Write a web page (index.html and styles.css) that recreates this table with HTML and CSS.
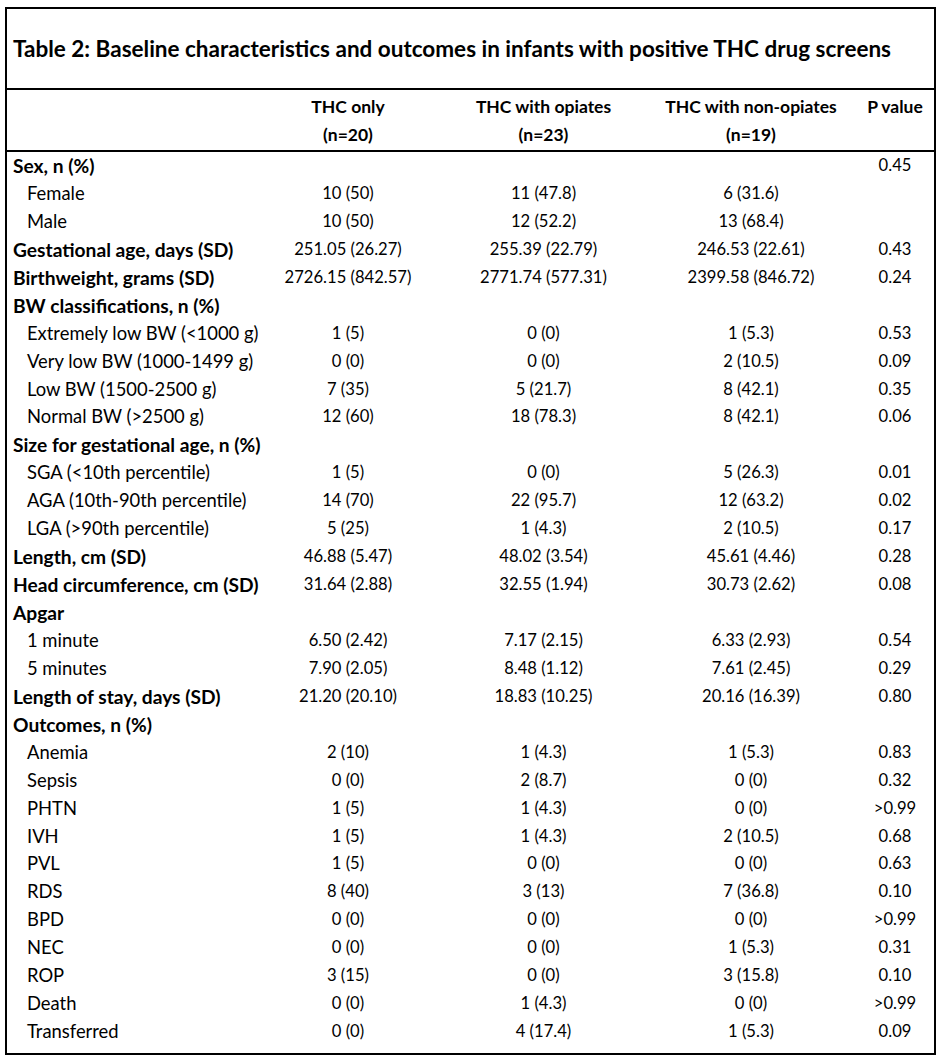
FILE: index.html
```html
<!DOCTYPE html>
<html>
<head>
<meta charset="utf-8">
<link rel="stylesheet" href="styles.css">
</head>
<body>
<div class="frame">
  <div class="title">Table 2: Baseline characteristics and outcomes in infants with positive THC drug screens</div>
  <table class="tbl">
    <colgroup>
      <col class="c0"><col class="c1"><col class="c2"><col class="c3"><col class="c4">
    </colgroup>
    <thead>
      <tr>
        <th></th>
        <th>THC only<br>(n=20)</th>
        <th>THC with opiates<br>(n=23)</th>
        <th>THC with non-opiates<br>(n=19)</th>
        <th class="pv">P value<br>&nbsp;</th>
      </tr>
    </thead>
    <tbody>
      <tr class="grp"><td>Sex, n (%)</td><td></td><td></td><td></td><td>0.45</td></tr>
      <tr><td class="sub">Female</td><td>10 (50)</td><td>11 (47.8)</td><td>6 (31.6)</td><td></td></tr>
      <tr><td class="sub">Male</td><td>10 (50)</td><td>12 (52.2)</td><td>13 (68.4)</td><td></td></tr>
      <tr class="grp"><td>Gestational age, days (SD)</td><td>251.05 (26.27)</td><td>255.39 (22.79)</td><td>246.53 (22.61)</td><td>0.43</td></tr>
      <tr class="grp"><td>Birthweight, grams (SD)</td><td>2726.15 (842.57)</td><td>2771.74 (577.31)</td><td>2399.58 (846.72)</td><td>0.24</td></tr>
      <tr class="grp"><td>BW classifications, n (%)</td><td></td><td></td><td></td><td></td></tr>
      <tr><td class="sub">Extremely low BW (&lt;1000 g)</td><td>1 (5)</td><td>0 (0)</td><td>1 (5.3)</td><td>0.53</td></tr>
      <tr><td class="sub">Very low BW (1000-1499 g)</td><td>0 (0)</td><td>0 (0)</td><td>2 (10.5)</td><td>0.09</td></tr>
      <tr><td class="sub">Low BW (1500-2500 g)</td><td>7 (35)</td><td>5 (21.7)</td><td>8 (42.1)</td><td>0.35</td></tr>
      <tr><td class="sub">Normal BW (&gt;2500 g)</td><td>12 (60)</td><td>18 (78.3)</td><td>8 (42.1)</td><td>0.06</td></tr>
      <tr class="grp"><td>Size for gestational age, n (%)</td><td></td><td></td><td></td><td></td></tr>
      <tr><td class="sub">SGA (&lt;10th percentile)</td><td>1 (5)</td><td>0 (0)</td><td>5 (26.3)</td><td>0.01</td></tr>
      <tr><td class="sub">AGA (10th-90th percentile)</td><td>14 (70)</td><td>22 (95.7)</td><td>12 (63.2)</td><td>0.02</td></tr>
      <tr><td class="sub">LGA (&gt;90th percentile)</td><td>5 (25)</td><td>1 (4.3)</td><td>2 (10.5)</td><td>0.17</td></tr>
      <tr class="grp"><td>Length, cm (SD)</td><td>46.88 (5.47)</td><td>48.02 (3.54)</td><td>45.61 (4.46)</td><td>0.28</td></tr>
      <tr class="grp"><td>Head circumference, cm (SD)</td><td>31.64 (2.88)</td><td>32.55 (1.94)</td><td>30.73 (2.62)</td><td>0.08</td></tr>
      <tr class="grp"><td>Apgar</td><td></td><td></td><td></td><td></td></tr>
      <tr><td class="sub">1 minute</td><td>6.50 (2.42)</td><td>7.17 (2.15)</td><td>6.33 (2.93)</td><td>0.54</td></tr>
      <tr><td class="sub">5 minutes</td><td>7.90 (2.05)</td><td>8.48 (1.12)</td><td>7.61 (2.45)</td><td>0.29</td></tr>
      <tr class="grp"><td>Length of stay, days (SD)</td><td>21.20 (20.10)</td><td>18.83 (10.25)</td><td>20.16 (16.39)</td><td>0.80</td></tr>
      <tr class="grp"><td>Outcomes, n (%)</td><td></td><td></td><td></td><td></td></tr>
      <tr><td class="sub">Anemia</td><td>2 (10)</td><td>1 (4.3)</td><td>1 (5.3)</td><td>0.83</td></tr>
      <tr><td class="sub">Sepsis</td><td>0 (0)</td><td>2 (8.7)</td><td>0 (0)</td><td>0.32</td></tr>
      <tr><td class="sub">PHTN</td><td>1 (5)</td><td>1 (4.3)</td><td>0 (0)</td><td>&gt;0.99</td></tr>
      <tr><td class="sub">IVH</td><td>1 (5)</td><td>1 (4.3)</td><td>2 (10.5)</td><td>0.68</td></tr>
      <tr><td class="sub">PVL</td><td>1 (5)</td><td>0 (0)</td><td>0 (0)</td><td>0.63</td></tr>
      <tr><td class="sub">RDS</td><td>8 (40)</td><td>3 (13)</td><td>7 (36.8)</td><td>0.10</td></tr>
      <tr><td class="sub">BPD</td><td>0 (0)</td><td>0 (0)</td><td>0 (0)</td><td>&gt;0.99</td></tr>
      <tr><td class="sub">NEC</td><td>0 (0)</td><td>0 (0)</td><td>1 (5.3)</td><td>0.31</td></tr>
      <tr><td class="sub">ROP</td><td>3 (15)</td><td>0 (0)</td><td>3 (15.8)</td><td>0.10</td></tr>
      <tr><td class="sub">Death</td><td>0 (0)</td><td>1 (4.3)</td><td>0 (0)</td><td>&gt;0.99</td></tr>
      <tr><td class="sub">Transferred</td><td>0 (0)</td><td>4 (17.4)</td><td>1 (5.3)</td><td>0.09</td></tr>
    </tbody>
  </table>
</div>
</body>
</html>
```

FILE: styles.css
```css
html, body {
  margin: 0;
  padding: 0;
  background: #ffffff;
}
body {
  padding: 7px 10px 0 5px;
  font-family: Lato, "Open Sans", "Liberation Sans", sans-serif;
  color: #000;
}
.frame {
  width: 931px;
  border: 2px solid #000;
  box-sizing: border-box;
  padding-bottom: 7px;
}
.title {
  height: 81px;
  display: flex;
  align-items: center;
  padding-left: 6px;
  font-weight: 700;
  font-size: 22.5px;
  border-bottom: 2px solid #000;
  box-sizing: border-box;
}
.tbl {
  width: 100%;
  table-layout: fixed;
  border-collapse: collapse;
  font-size: 16.6px;
}
.c0 { width: 248px; }
.c1 { width: 186px; }
.c2 { width: 205px; }
.c3 { width: 210px; }
.c4 { width: 78px; }
.tbl th {
  font-weight: 700;
  font-size: 17.5px;
  text-align: center;
  line-height: 28px;
  padding: 3px 0 1px 0;
  border-bottom: 2px solid #000;
  white-space: nowrap;
}
.tbl td {
  text-align: center;
  line-height: 27.93px;
  height: 27.93px;
  padding: 0;
  white-space: nowrap;
}
.tbl td:first-child {
  text-align: left;
  padding-left: 6px;
  font-size: 18.4px;
}
.tbl tr.grp td:first-child {
  font-weight: 700;
  font-size: 19.2px;
}
.tbl td.sub {
  padding-left: 20px;
}
```
